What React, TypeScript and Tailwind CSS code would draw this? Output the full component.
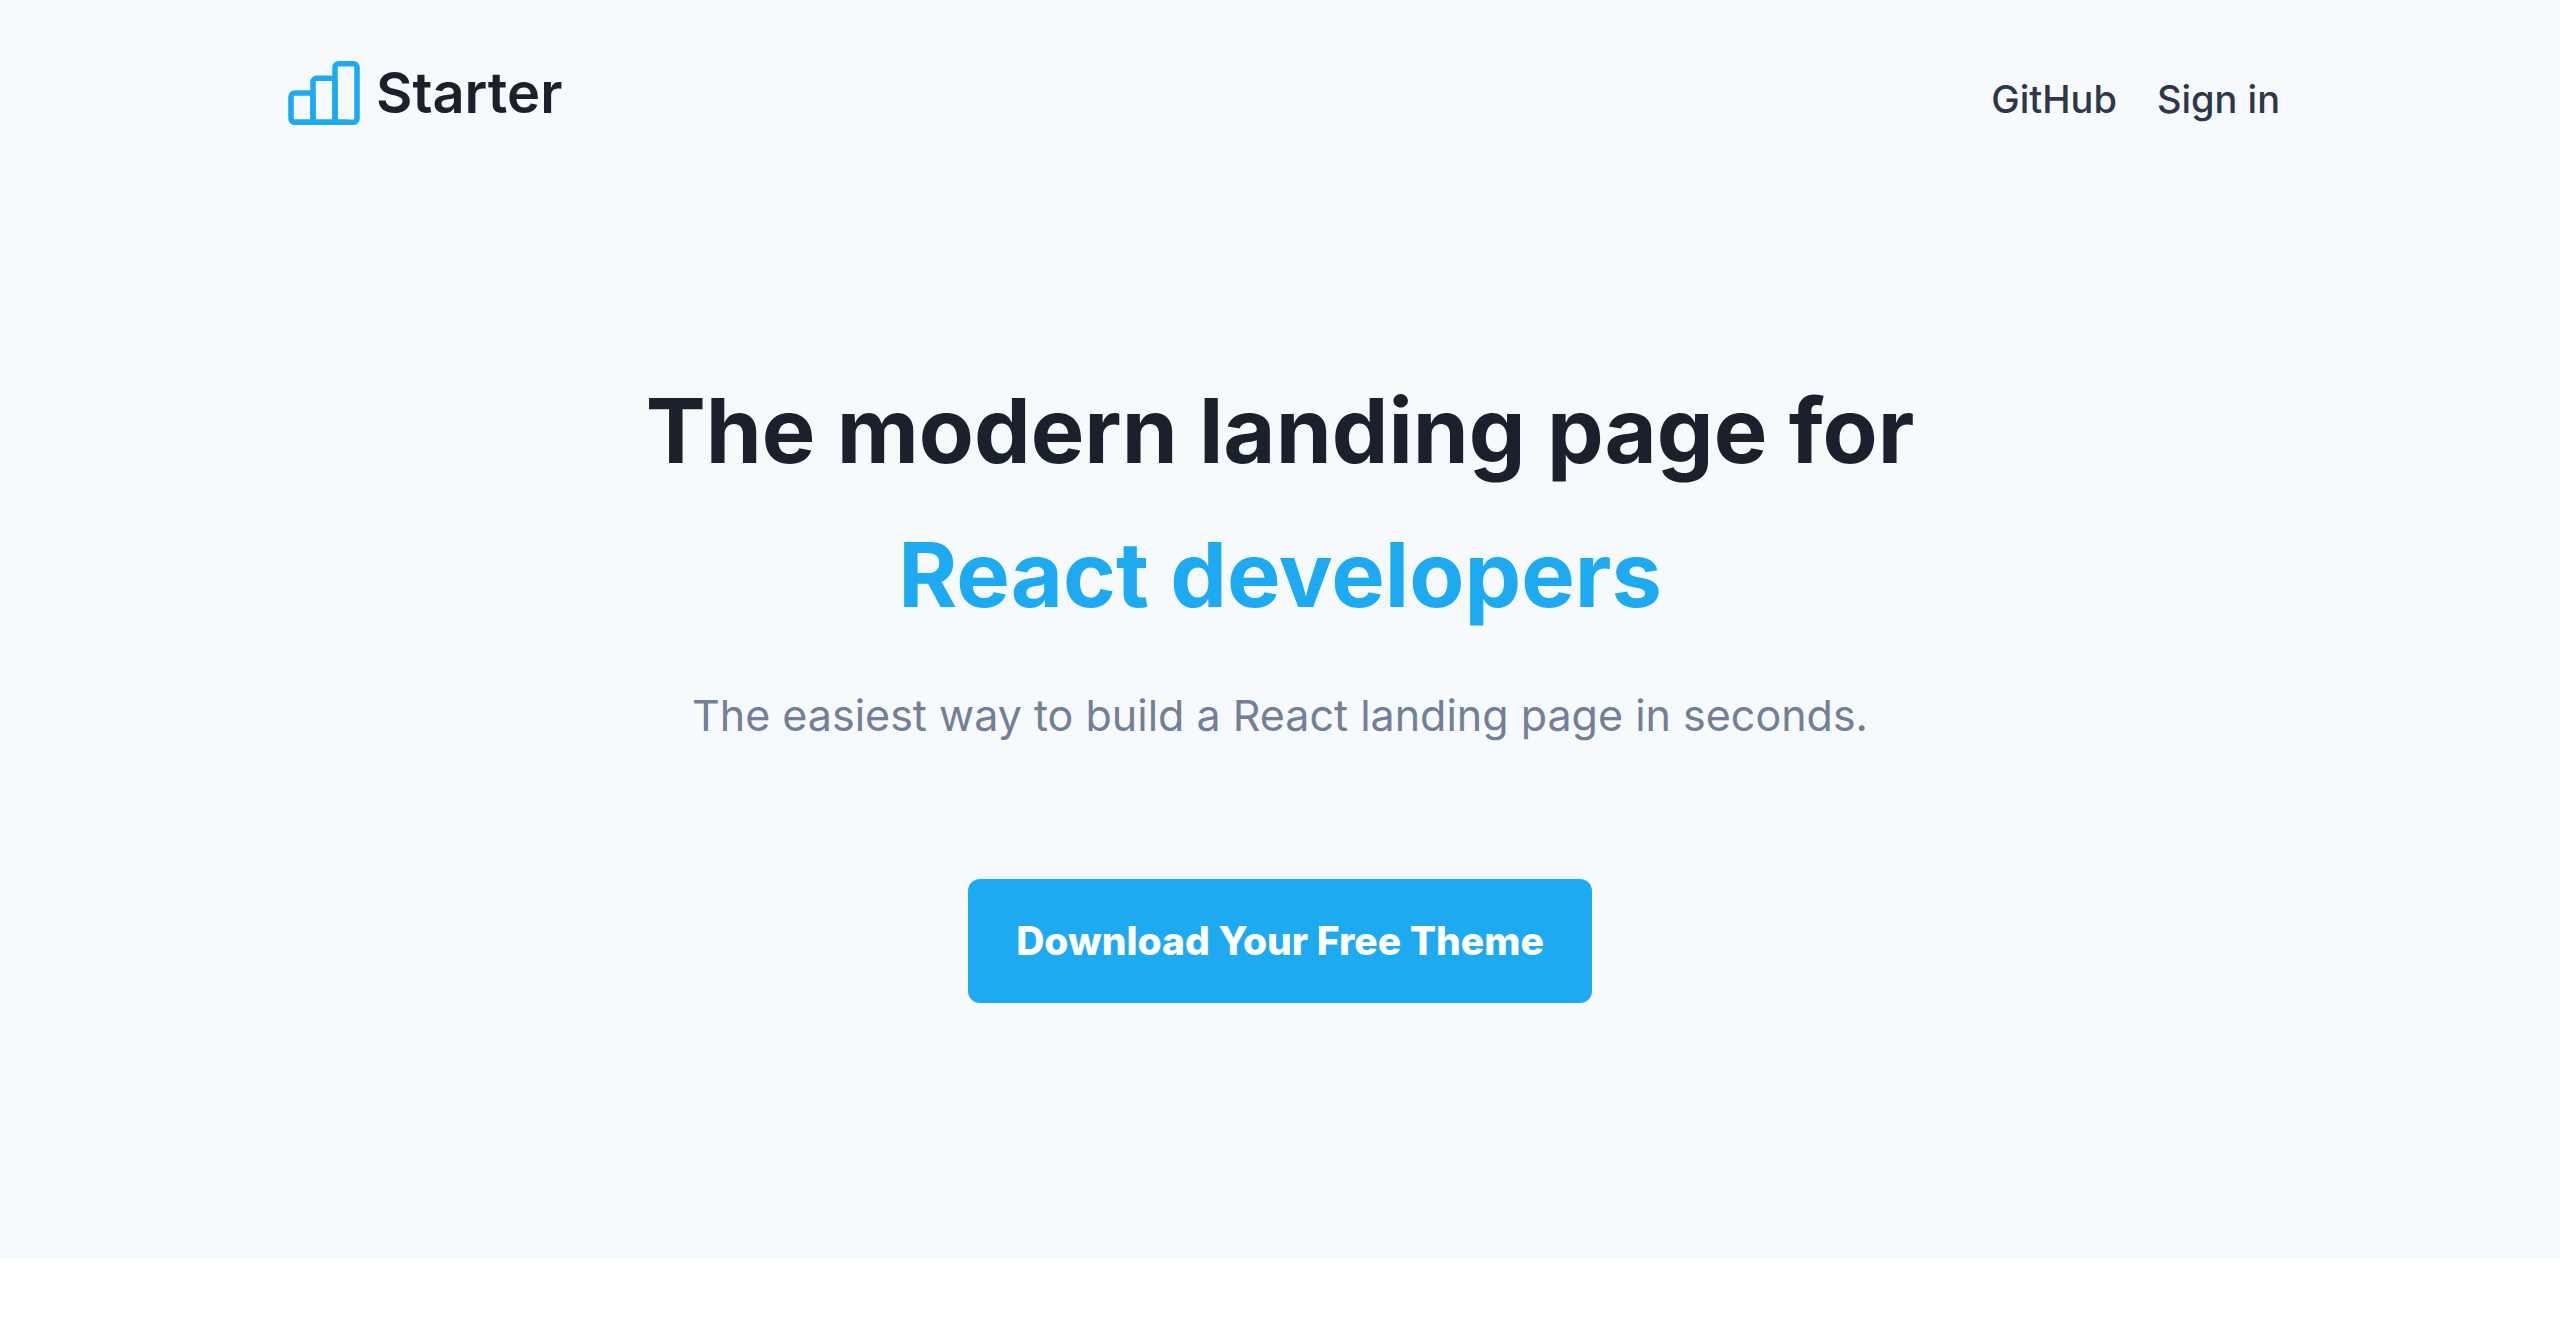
const NAV_LINKS = ["GitHub", "Sign in"];

function Logo() {
  return (
    <a href="#" className="flex items-center text-[56px] leading-[80px] font-semibold text-[#1a202c]">
      <svg
        className="mr-2 size-22 text-[#1eaaf1]"
        viewBox="0 0 24 24"
        fill="none"
        stroke="currentColor"
        strokeWidth="1.5"
        strokeLinecap="round"
        strokeLinejoin="round"
        aria-hidden="true"
      >
        <rect x="3" y="12" width="6" height="8" rx="1" />
        <rect x="9" y="8" width="6" height="12" rx="1" />
        <rect x="15" y="4" width="6" height="16" rx="1" />
        <path d="M4 20h14" />
      </svg>
      Starter
    </a>
  );
}

export default function App() {
  return (
    <div className="min-h-screen bg-white font-['Inter',sans-serif] antialiased">
      <div className="bg-[#f7fafc]">
        <div className="mx-auto max-w-[2048px] px-6">
          <header className="flex items-center justify-between pt-[49px]">
            <Logo />
            <nav className="pt-3">
              <ul className="flex items-center gap-10">
                {NAV_LINKS.map((label) => (
                  <li key={label}>
                    <a href="#" className="text-[38px] leading-[60px] font-medium text-[#2d3748]">
                      {label}
                    </a>
                  </li>
                ))}
              </ul>
            </nav>
          </header>
          <main className="pt-[222px] pb-64 text-center">
            <h1 className="text-[90px] leading-[144px] font-bold text-[#1a202c]">
              The modern landing page for
              <span className="block text-[#1eaaf1]">React developers</span>
            </h1>
            <p className="mt-8 text-[43px] leading-[72px] text-[#718096]">
              The easiest way to build a React landing page in seconds.
            </p>
            <button
              type="button"
              className="mt-32 rounded-xl bg-[#1eaaf1] px-12 py-8 text-[39px] leading-[60px] font-extrabold text-white"
            >
              Download Your Free Theme
            </button>
          </main>
        </div>
      </div>
    </div>
  );
}
